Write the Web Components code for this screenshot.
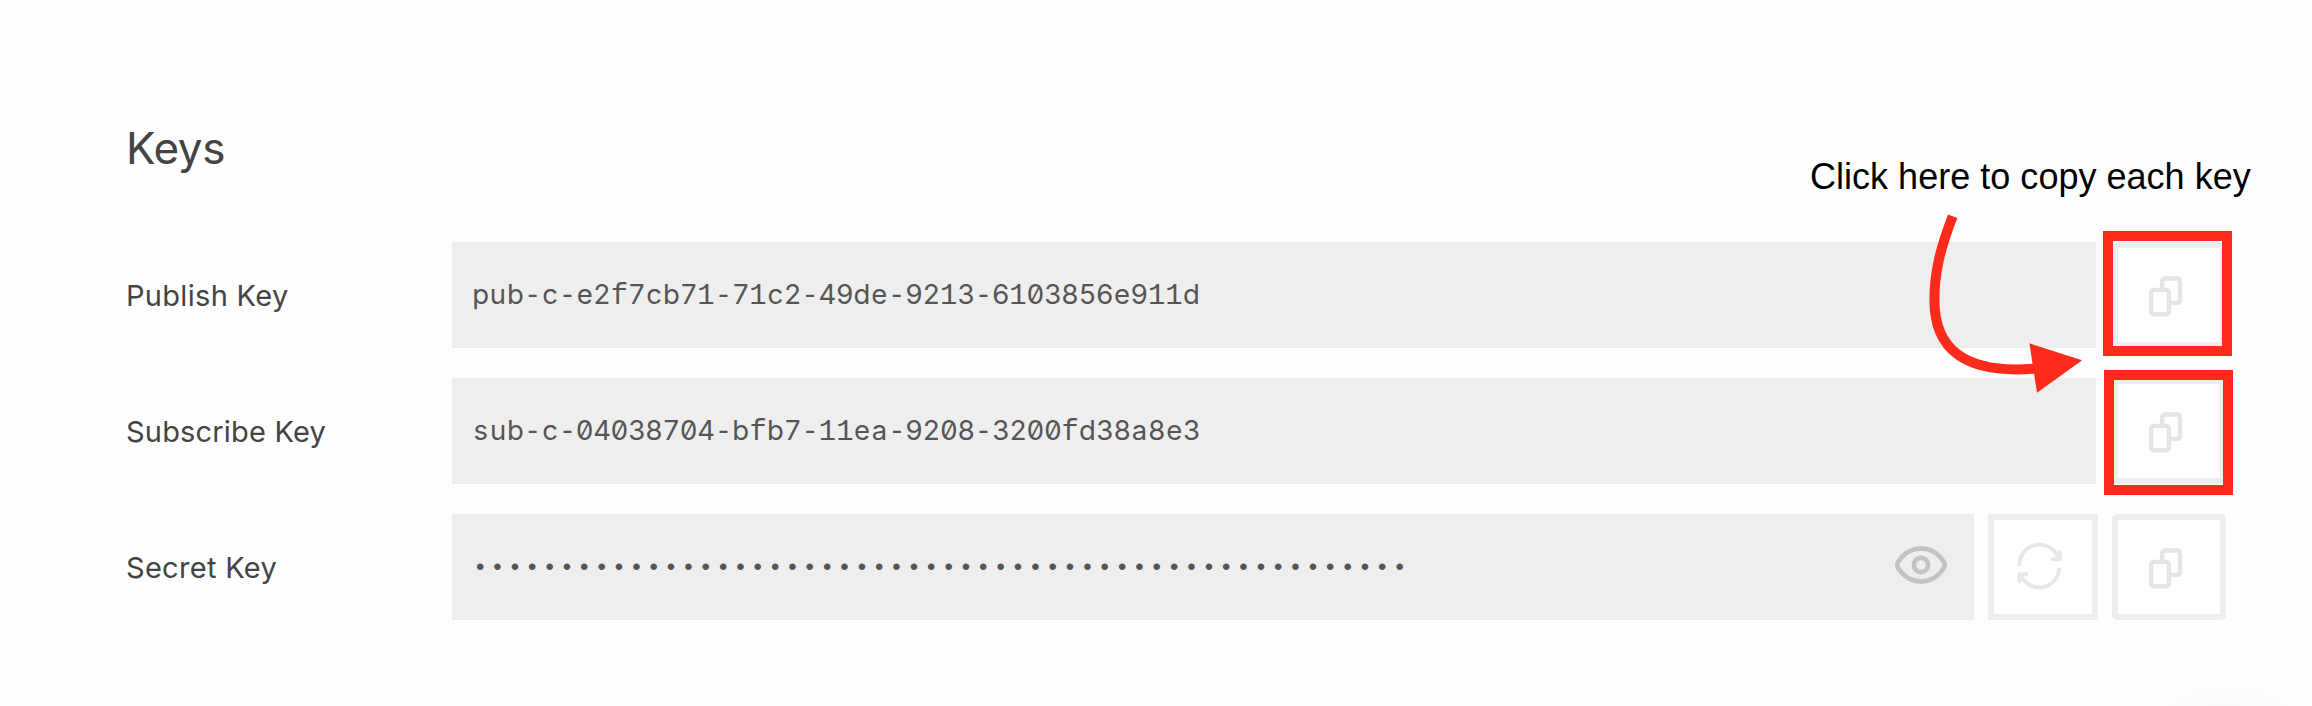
<!DOCTYPE html>
<html lang="en">
<head>
<meta charset="utf-8">
<title>Keys</title>
<style>
html,body{margin:0;padding:0;background:#fefefe;overflow:hidden}
</style>
</head>
<body>
<keys-panel></keys-panel>
<script>
const define=(name,html,setup)=>customElements.define(name,class extends HTMLElement{
  connectedCallback(){
    if(this.shadowRoot)return;
    const t=document.createElement('template');
    t.innerHTML=html;
    this.attachShadow({mode:'open'}).append(t.content.cloneNode(true));
    if(setup)setup(this,this.shadowRoot);
  }
});

define('copy-button',`<style>
:host{display:block;flex:none;box-sizing:border-box;width:114px;height:106px;border:6px solid #eee;border-radius:5px;background:#fff}
svg{display:block;width:102px;height:94px}
</style>
<svg viewBox="6 6 102 94" fill="#fff" stroke="#e5e5e5" stroke-width="4.4"><rect x="50.1" y="36.5" width="17.9" height="24.5" rx="2.5"/><rect x="39" y="48" width="18" height="24.2" rx="2.5"/></svg>`);

define('refresh-button',`<style>
:host{display:block;flex:none;box-sizing:border-box;width:110px;height:106px;border:6px solid #eee;background:#fff}
svg{display:block;width:98px;height:94px}
</style>
<svg viewBox="1994 520 98 94" fill="none" stroke="#e7e7e7" stroke-width="3.8" stroke-linejoin="round"><path d="M2019.5 565.8A20 20 0 0 1 2058.5 558.5M2059.3 568A20 20 0 0 1 2020.8 575"/><path stroke-linecap="round" d="M2059.9 552V559.3H2052.5M2026.3 574.2H2019.3V581.3"/></svg>`);

define('eye-icon',`<style>
:host{display:block;width:54px;height:42px;position:relative;top:-2px}
svg{display:block;width:100%;height:100%}
</style>
<svg viewBox="1894 544 54 42" fill="none" stroke="#c3c3c3" stroke-width="4.6" stroke-linejoin="round"><path d="M1898 562.2C1903.500 553.500 1911.500 548.500 1921 548.500S1938.500 553.500 1944 562.200Q1945.500 565 1944 567.800C1938.500 576.500 1930.500 581.500 1921 581.500S1903.500 576.500 1898 567.800Q1896.500 565 1898 562.200Z"/><circle cx="1921" cy="565" r="7.1"/></svg>`);

define('key-field',`<style>
:host{display:flex;flex:1;box-sizing:border-box;height:106px;padding:0 26px 0 20px;align-items:center;justify-content:space-between;background:#eee;color:#555}
.v{font:27.5px/40px Inter,sans-serif;font-feature-settings:"zero" 1;white-space:pre}
.m{font:28.9px/40px "Liberation Mono",monospace}
.dot{font-size:24px;letter-spacing:2.946px;margin-left:1px;position:relative;top:2px}
</style><span class="v"></span><slot></slot>`,(h,r)=>{
  const v=r.querySelector('.v'),value=h.getAttribute('value');
  if(value[0]==='•'){v.className='v m dot';v.textContent=value;return}
  // Every glyph is centred in a fixed-pitch cell.
  const pitch=17.34;
  for(const c of value){
    const s=document.createElement('span');
    s.textContent=c;
    if('1f-'.includes(c))s.className='m';
    v.append(s);
    const d=(pitch-s.getBoundingClientRect().width)/2;
    s.style.letterSpacing=d+'px';
    s.style.marginLeft=d+'px';
  }
});

// Spaces the text of an element so that it takes the given width.
const fit=(el,width)=>{
  const w=el.getBoundingClientRect().width;
  el.style.letterSpacing=(width-w)/el.textContent.length+'px';
};

define('key-row',`<style>
:host{display:flex;height:106px;align-items:center}
.l{width:326px;padding-top:2px;flex:none;font:29px/40px Inter,sans-serif;color:#444;white-space:nowrap}
.b{display:flex;flex:1}
::slotted(copy-button){margin-left:var(--copy-gap,16px)}
::slotted(refresh-button){margin-left:14px}
</style><div class="l"><span></span></div><div class="b"><slot></slot></div>`,(h,r)=>{
  const l=r.querySelector('.l span');
  l.textContent=h.getAttribute('label');
  fit(l,+h.getAttribute('fit'));
});

define('callout-layer',`<style>
:host{position:absolute;inset:0;pointer-events:none}
svg{position:absolute;inset:0;width:2312px;height:706px}
.t{position:absolute;left:1810px;top:156px;font:36px/42px "Liberation Sans",Arial,sans-serif;color:#000;white-space:nowrap;letter-spacing:.02px}
.g{position:absolute;right:0;bottom:0;width:212px;height:60px;background:radial-gradient(circle at 127px 145px,#f5f5f5 50px,#fafafa 85px,#fefefe 119px)}
</style>
<div class="g"></div>
<div class="t">Click here to copy each key</div>
<svg viewBox="0 0 2312 706" fill="none" stroke="#fe2b1c" stroke-width="10">
<rect x="2108" y="236" width="119" height="115"/><rect x="2109" y="375" width="119" height="115"/>
<path d="M1952.700 216.200C1940 249 1934.400 273 1934.400 300C1934.400 347 1962 375 2036 368.500"/>
<path stroke="none" fill="#fe2b1c" d="M2029.400 343.300L2082.200 360.300L2037 392.800Z"/>
</svg>`);

define('keys-panel',`<style>
:host{display:block;position:relative;width:2312px;height:706px;box-sizing:border-box;padding:120px 86px 0 126px;overflow:hidden;background:#fefefe}
h1{margin:0;height:122px;font:400 44px/56px Inter,sans-serif;color:#444}
.rows{display:grid;row-gap:30px}
.secret{--copy-gap:14px}
</style>
<h1><span>Keys</span></h1>
<div class="rows">
<key-row label="Publish Key" fit="162.5"><key-field value="pub-c-e2f7cb71-71c2-49de-9213-6103856e911d"></key-field><copy-button></copy-button></key-row>
<key-row label="Subscribe Key" fit="200"><key-field value="sub-c-04038704-bfb7-11ea-9208-3200fd38a8e3"></key-field><copy-button></copy-button></key-row>
<key-row class="secret" label="Secret Key" fit="151"><key-field value="${'•'.repeat(54)}"><eye-icon></eye-icon></key-field><refresh-button></refresh-button><copy-button></copy-button></key-row>
</div>
<callout-layer></callout-layer>`,(h,r)=>fit(r.querySelector('h1 span'),99));
</script>
</body>
</html>
